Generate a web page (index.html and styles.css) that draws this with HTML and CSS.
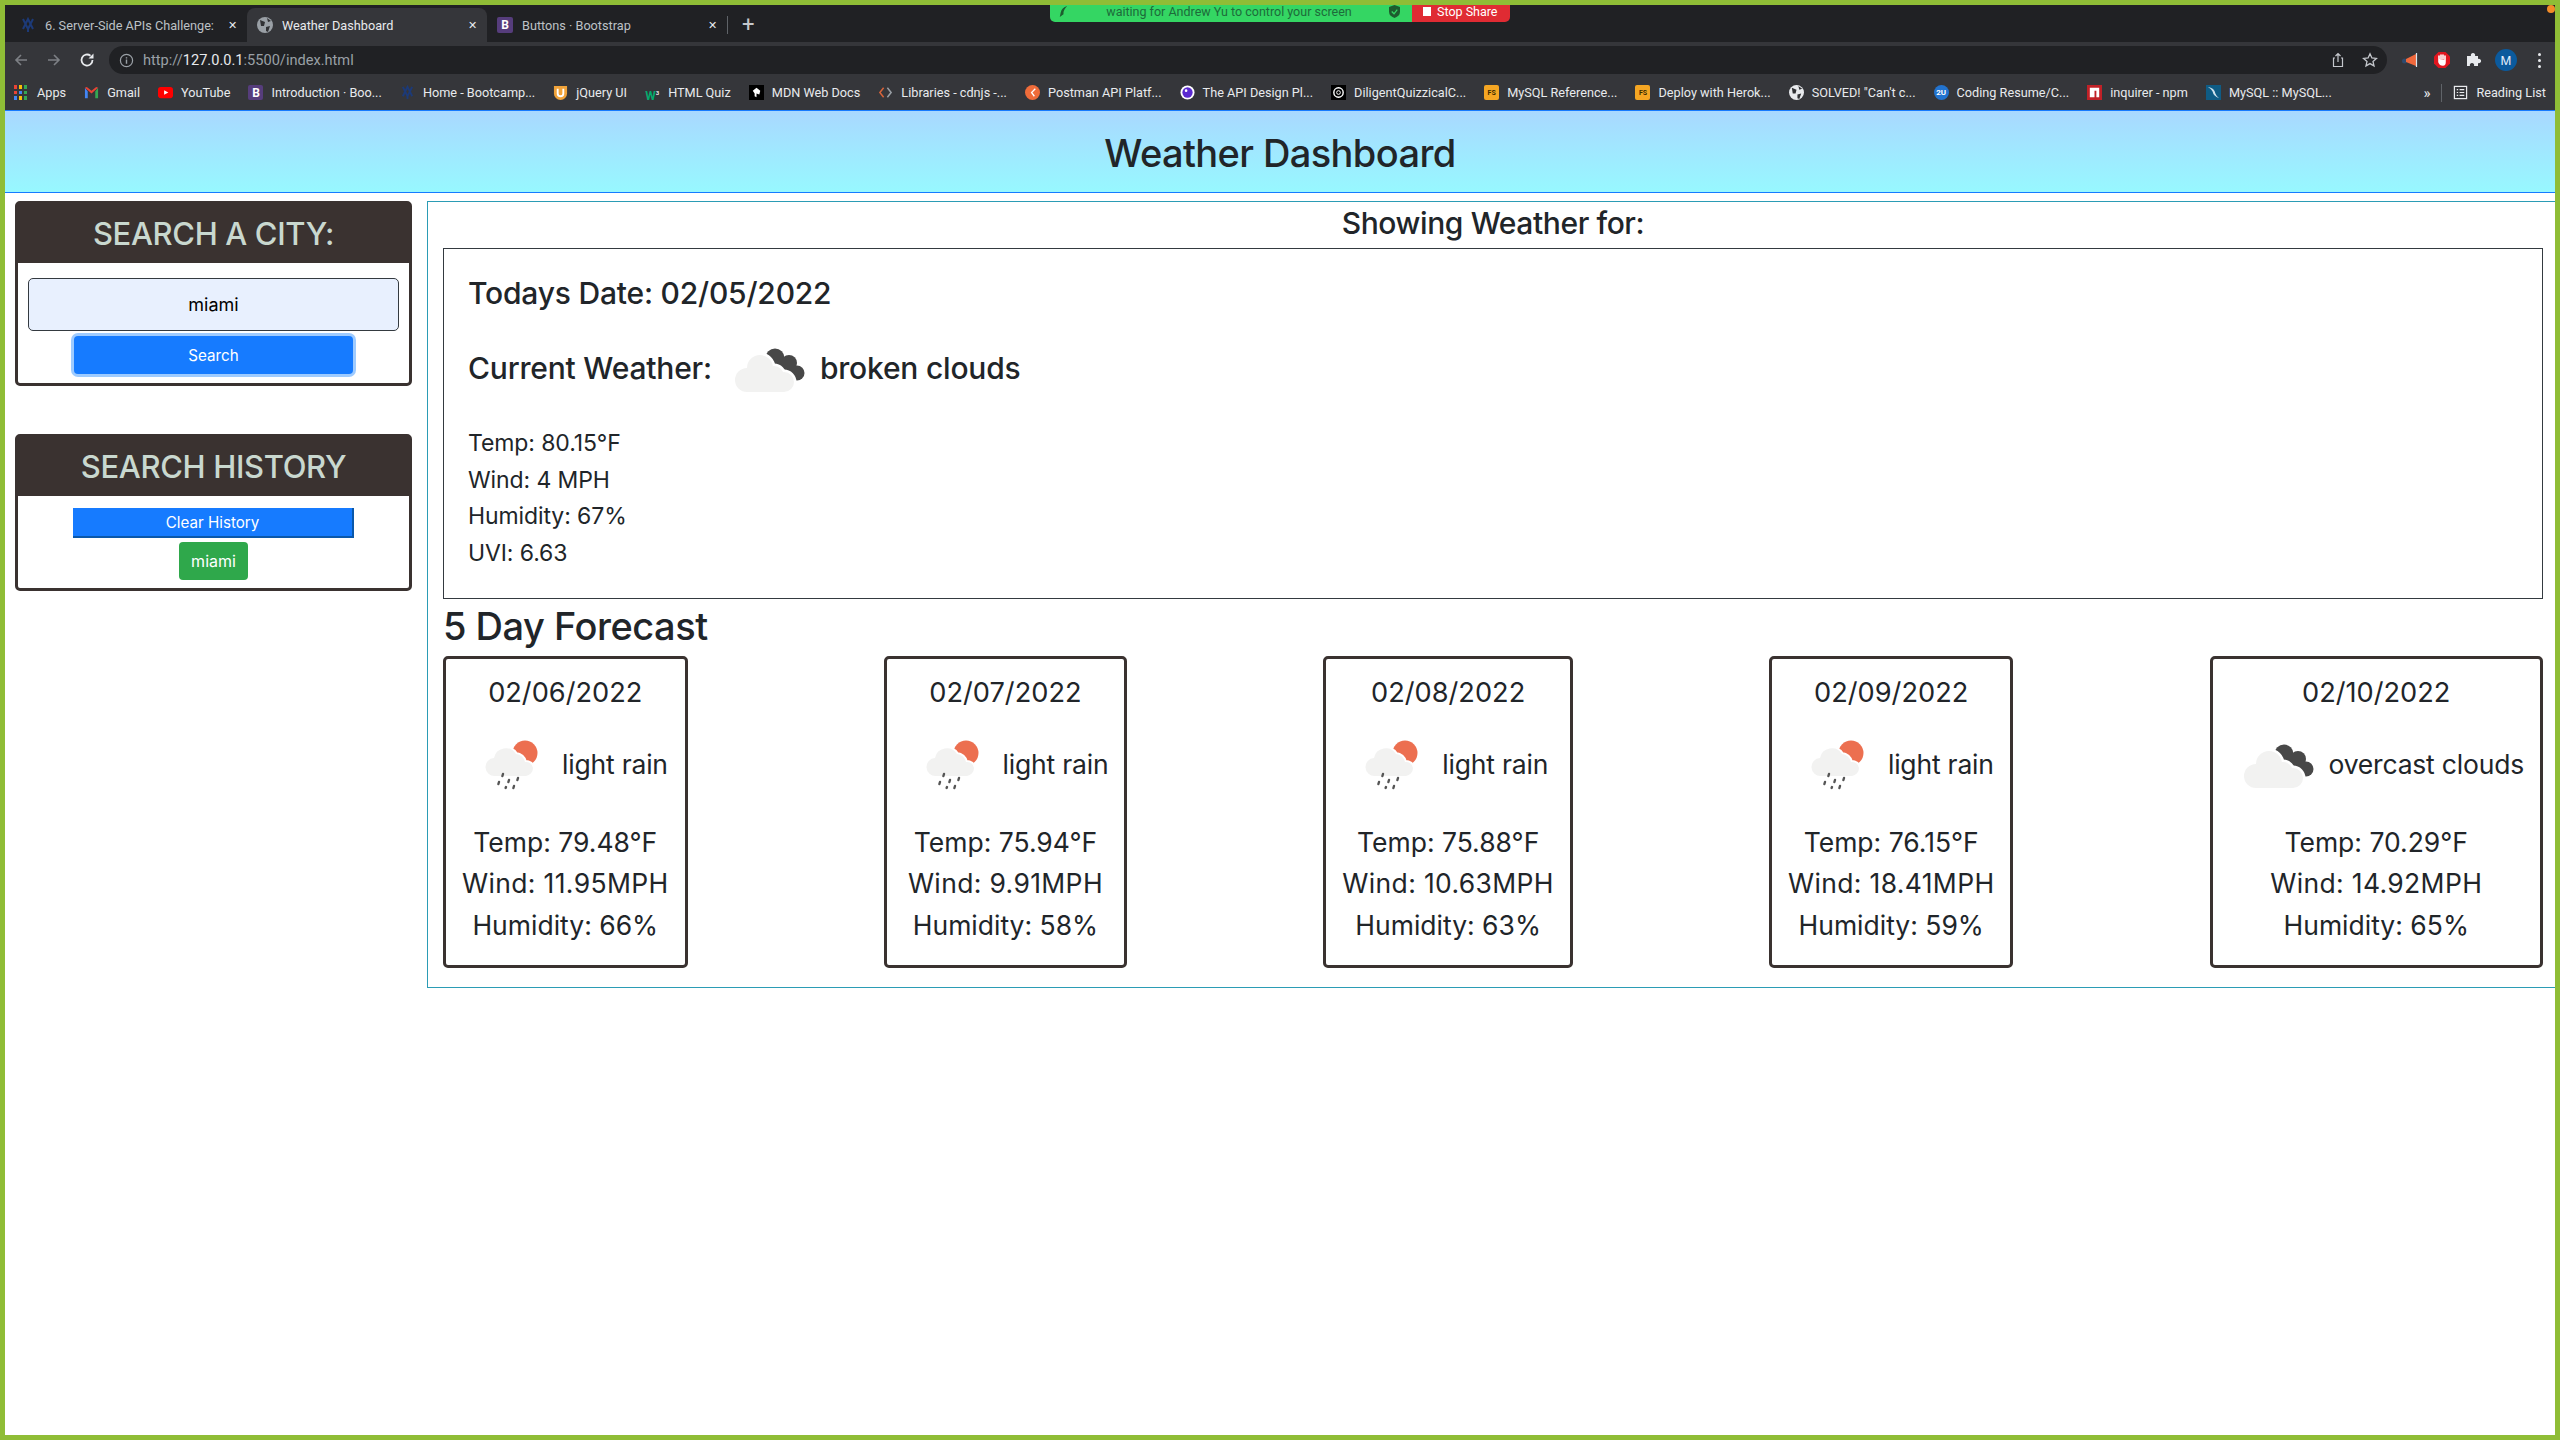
FILE: index.html
```html
<!DOCTYPE html>
<html lang="en">
<head>
    <meta charset="UTF-8">
    <meta name="viewport" content="width=device-width, initial-scale=1.0">
    <title>Weather Dashboard</title>
    <link rel="stylesheet" href="styles.css">
</head>
<body>
    <svg class="defs" width="0" height="0">
        <symbol id="icon-clouds" viewBox="0 0 100 100">
            <g fill="#484848">
                <circle cx="55" cy="40" r="9.5"/>
                <circle cx="69" cy="45" r="8"/>
                <circle cx="77" cy="55" r="7.5"/>
                <path d="M48 34 L80 50 L76 63 L60 60 L46 42 Z"/>
            </g>
            <g fill="#fff" stroke="#fff" stroke-width="5">
                <circle cx="40" cy="50" r="13"/>
                <circle cx="27" cy="62" r="12"/>
                <circle cx="54" cy="58" r="10"/>
                <circle cx="64" cy="64" r="10"/>
            </g>
            <g fill="#f2f2f1">
                <circle cx="40" cy="50" r="13"/>
                <circle cx="27" cy="62" r="12"/>
                <circle cx="54" cy="58" r="10"/>
                <circle cx="64" cy="64" r="10"/>
                <rect x="27" y="58" width="37" height="16"/>
            </g>
        </symbol>
        <symbol id="icon-rain" viewBox="0 0 100 100">
            <circle cx="63" cy="39" r="12.5" fill="#ec6f50"/>
            <path d="M33 62 a9 9 0 0 1 -1 -18 a12 12 0 0 1 22 -4 a10 10 0 0 1 9 8 a7 7 0 0 1 8 6 a8 8 0 0 1 -7 8 Z" fill="#fff" stroke="#fff" stroke-width="4"/>
            <path d="M33 62 a9 9 0 0 1 -1 -18 a12 12 0 0 1 22 -4 a10 10 0 0 1 9 8 a7 7 0 0 1 8 6 a8 8 0 0 1 -7 8 Z" fill="#f2f2f1"/>
            <g stroke="#555" stroke-width="2.4" stroke-linecap="round">
                <path d="M41 60 l-.6 2"/><path d="M37 68 l-.6 2"/><path d="M47 66 l-.6 2"/>
                <path d="M56 64 l-.6 2"/><path d="M44 73 l-.4 1"/><path d="M52 72 l-.6 2"/>
            </g>
        </symbol>
        <symbol id="icon-globe" viewBox="0 0 16 16">
            <circle cx="8" cy="8" r="8" fill="currentColor"/>
            <path d="M3 3 L8 5 L7 9 L4 9 Z M9 10 L13 9 L11 15 L9 14 Z M10 1 L14 4 L11 5 Z" fill="#303134"/>
        </symbol>
    </svg>

    <div class="window">
        <div class="tabstrip">
            <div class="tab">
                <svg class="fav" viewBox="0 0 16 16"><path d="M3 2 L8 12 L13 2 M3 12 L8 2 L13 12 M8 12 V15" fill="none" stroke="#1c3a78" stroke-width="2"/></svg>
                <span class="tab-title">6. Server-Side APIs Challenge:</span>
                <span class="tab-close">✕</span>
            </div>
            <div class="tab active">
                <svg class="fav globe"><use href="#icon-globe"/></svg>
                <span class="tab-title">Weather Dashboard</span>
                <span class="tab-close">✕</span>
            </div>
            <div class="tab">
                <span class="fav badge badge-b">B</span>
                <span class="tab-title">Buttons · Bootstrap</span>
                <span class="tab-close">✕</span>
            </div>
            <span class="tab-sep"></span>
            <span class="new-tab">+</span>
        </div>

        <div class="toolbar">
            <div class="nav">
                <svg viewBox="0 0 16 16" class="dim"><path d="M14 8 H3 M8 3 L3 8 L8 13" fill="none" stroke="currentColor" stroke-width="1.6"/></svg>
                <svg viewBox="0 0 16 16" class="dim"><path d="M2 8 H13 M8 3 L13 8 L8 13" fill="none" stroke="currentColor" stroke-width="1.6"/></svg>
                <svg viewBox="0 0 16 16"><path d="M13.5 8 A5.5 5.5 0 1 1 11.5 3.8" fill="none" stroke="currentColor" stroke-width="1.8"/><path d="M14.5 1.5 V6.5 H9.5 Z" fill="currentColor"/></svg>
            </div>
            <div class="omnibox">
                <svg class="info" viewBox="0 0 16 16"><circle cx="8" cy="8" r="6.5" fill="none" stroke="currentColor" stroke-width="1.3"/><path d="M8 7 V11.5 M8 4.5 V5.8" stroke="currentColor" stroke-width="1.5"/></svg>
                <span class="url">http://<b>127.0.0.1</b>:5500/index.html</span>
                <svg class="omni-icon" viewBox="0 0 16 16"><path d="M5 6 H3.5 V14.5 H12.5 V6 H11 M8 10 V1.5 M5.5 4 L8 1.5 L10.5 4" fill="none" stroke="currentColor" stroke-width="1.2"/></svg>
                <svg class="omni-icon" viewBox="0 0 16 16"><path d="M8 1.8 L9.9 6 L14.4 6.4 L11 9.4 L12 13.9 L8 11.6 L4 13.9 L5 9.4 L1.6 6.4 L6.1 6 Z" fill="none" stroke="currentColor" stroke-width="1.3"/></svg>
            </div>
            <div class="extensions">
                <svg viewBox="0 0 18 18"><circle cx="3.5" cy="10" r="2.5" fill="#2c4a6e"/><path d="M5 8 L15 3 V15 L5 11 Z" fill="#f0683c"/><path d="M15.5 2 V16" stroke="#d8e4ee" stroke-width="1.2"/></svg>
                <svg viewBox="0 0 18 18"><path d="M5.5 1 H12.5 L17 5.5 V12.5 L12.5 17 H5.5 L1 12.5 V5.5 Z" fill="#e0161f"/><path d="M6 8 V5 M8 8 V4 M10 8 V4 M12 9 V5 M6 8 V11 Q7 14 10 14 Q12 14 12 11 V9" fill="#fff" stroke="#fff" stroke-width="1.6" stroke-linecap="round"/></svg>
                <svg viewBox="0 0 18 18"><path d="M2 5 H6 a2.2 2.2 0 1 1 4 0 H13 V8 a2.2 2.2 0 1 1 0 4 V15 H9 a2.2 2.2 0 1 0 -4 0 H2 Z" fill="#e8eaed"/></svg>
                <span class="avatar">M</span>
                <span class="dots"><i></i><i></i><i></i></span>
            </div>
        </div>

        <div class="bookmarks">
            <div class="bm"><span class="bm-icon apps"><i></i><i></i><i></i><i></i><i></i><i></i><i></i><i></i><i></i></span>Apps</div>
            <div class="bm"><svg class="bm-icon" viewBox="0 0 16 16"><path d="M1 3 V14 H4 V7 Z" fill="#4285f4"/><path d="M15 3 V14 H12 V7 Z" fill="#34a853"/><path d="M1 3 L8 9 L15 3 L13 2 L8 6 L3 2 Z" fill="#ea4335"/></svg>Gmail</div>
            <div class="bm"><svg class="bm-icon" viewBox="0 0 16 16"><rect y="2" width="16" height="12" rx="3" fill="#f00"/><path d="M6.5 5.5 L11 8 L6.5 10.5 Z" fill="#fff"/></svg>YouTube</div>
            <div class="bm"><span class="bm-icon badge badge-b">B</span>Introduction · Boo...</div>
            <div class="bm"><svg class="bm-icon" viewBox="0 0 16 16"><path d="M3 2 L8 12 L13 2 M3 12 L8 2 L13 12 M8 12 V15" fill="none" stroke="#1c3a78" stroke-width="2"/></svg>Home - Bootcamp...</div>
            <div class="bm"><svg class="bm-icon" viewBox="0 0 16 16"><path d="M1 1 H15 V9 A7 7 0 0 1 1 9 Z" fill="#f0a33a"/><path d="M5 4 V9 A3 3 0 0 0 11 9 V4" fill="none" stroke="#fff" stroke-width="2"/></svg>jQuery UI</div>
            <div class="bm"><span class="bm-icon w3">W<sup>3</sup></span>HTML Quiz</div>
            <div class="bm"><svg class="bm-icon" viewBox="0 0 16 16"><rect width="16" height="16" fill="#000"/><path d="M4 6 L8 3 L12 6 L11 10 L8 9 L8 13 L6 12 L6 9 Z" fill="#fff"/></svg>MDN Web Docs</div>
            <div class="bm"><svg class="bm-icon" viewBox="0 0 16 16"><path d="M6 3 L2 8 L6 13" fill="none" stroke="#d9643a" stroke-width="1.6"/><path d="M10 3 L14 8 L10 13" fill="none" stroke="#9aa0a6" stroke-width="1.6"/></svg>Libraries - cdnjs -...</div>
            <div class="bm"><svg class="bm-icon" viewBox="0 0 16 16"><circle cx="8" cy="8" r="8" fill="#ef6c3a"/><path d="M11 4 L7 8 L10 12" fill="none" stroke="#fff" stroke-width="1.4"/></svg>Postman API Platf...</div>
            <div class="bm"><svg class="bm-icon" viewBox="0 0 16 16"><circle cx="8" cy="8" r="7.5" fill="#fff"/><circle cx="8" cy="8" r="5.5" fill="#5b2ad0"/><circle cx="6.5" cy="6" r="1.4" fill="#fff"/></svg>The API Design Pl...</div>
            <div class="bm"><svg class="bm-icon" viewBox="0 0 16 16"><rect width="16" height="16" fill="#000"/><circle cx="8" cy="8" r="5" fill="none" stroke="#fff" stroke-width="1.5"/><circle cx="8" cy="8" r="2" fill="none" stroke="#fff"/></svg>DiligentQuizzicalC...</div>
            <div class="bm"><span class="bm-icon badge badge-fs">FS</span>MySQL Reference...</div>
            <div class="bm"><span class="bm-icon badge badge-fs">FS</span>Deploy with Herok...</div>
            <div class="bm"><svg class="bm-icon globe-light"><use href="#icon-globe"/></svg>SOLVED! "Can't c...</div>
            <div class="bm"><span class="bm-icon badge badge-2u">2U</span>Coding Resume/C...</div>
            <div class="bm"><svg class="bm-icon" viewBox="0 0 16 16"><rect width="16" height="16" fill="#c12127"/><path d="M3 3 H13 V13 H10 V6 H8 V13 H3 Z" fill="#fff"/></svg>inquirer - npm</div>
            <div class="bm"><svg class="bm-icon" viewBox="0 0 16 16"><rect width="16" height="16" fill="#0f5c85"/><path d="M2 2 Q9 3 10 9 Q11 12 14 14 Q8 12 7 7 Q6 4 2 2 Z" fill="#cfe3ee"/></svg>MySQL :: MySQL...</div>
            <div class="bm-end">
                <span class="more">»</span>
                <span class="bm-sep"></span>
                <div class="bm"><svg class="bm-icon" viewBox="0 0 16 16"><rect x="1.5" y="1.5" width="13" height="13" fill="none" stroke="#e8eaed" stroke-width="1.3"/><path d="M4 5 H5.5 M7 5 H12 M4 8 H5.5 M7 8 H12 M4 11 H5.5 M7 11 H12" stroke="#e8eaed" stroke-width="1.3"/></svg>Reading List</div>
            </div>
        </div>

        <header class="page-header">
            <h1>Weather Dashboard</h1>
        </header>

        <div class="layout">
            <aside class="sidebar">
                <section class="panel">
                    <h2 class="panel-head">SEARCH A CITY:</h2>
                    <div class="panel-body search-body">
                        <input class="city-input" type="text" value="miami">
                        <button class="btn btn-search">Search</button>
                    </div>
                </section>
                <section class="panel">
                    <h2 class="panel-head">SEARCH HISTORY</h2>
                    <div class="panel-body history-body">
                        <button class="btn btn-clear">Clear History</button>
                        <button class="btn btn-city">miami</button>
                    </div>
                </section>
            </aside>

            <main class="results">
                <h3 class="showing">Showing Weather for:</h3>
                <div class="current">
                    <h3 class="today">Todays Date: 02/05/2022</h3>
                    <div class="now">
                        <h3>Current Weather:</h3>
                        <svg class="wx"><use href="#icon-clouds"/></svg>
                        <h3>broken clouds</h3>
                    </div>
                    <div class="stats">
                        <p>Temp: 80.15°F</p>
                        <p>Wind: 4 MPH</p>
                        <p>Humidity: 67%</p>
                        <p>UVI: 6.63</p>
                    </div>
                </div>
                <h2 class="forecast-title">5 Day Forecast</h2>
                <div class="forecast">
                    <div class="card">
                        <div class="card-date">02/06/2022</div>
                        <div class="card-wx"><svg class="wx"><use href="#icon-rain"/></svg>light rain</div>
                        <p>Temp: 79.48°F</p>
                        <p class="wind">Wind: 11.95MPH</p>
                        <p>Humidity: 66%</p>
                    </div>
                    <div class="card">
                        <div class="card-date">02/07/2022</div>
                        <div class="card-wx"><svg class="wx"><use href="#icon-rain"/></svg>light rain</div>
                        <p>Temp: 75.94°F</p>
                        <p class="wind">Wind: 9.91MPH</p>
                        <p>Humidity: 58%</p>
                    </div>
                    <div class="card">
                        <div class="card-date">02/08/2022</div>
                        <div class="card-wx"><svg class="wx"><use href="#icon-rain"/></svg>light rain</div>
                        <p>Temp: 75.88°F</p>
                        <p class="wind">Wind: 10.63MPH</p>
                        <p>Humidity: 63%</p>
                    </div>
                    <div class="card">
                        <div class="card-date">02/09/2022</div>
                        <div class="card-wx"><svg class="wx"><use href="#icon-rain"/></svg>light rain</div>
                        <p>Temp: 76.15°F</p>
                        <p class="wind">Wind: 18.41MPH</p>
                        <p>Humidity: 59%</p>
                    </div>
                    <div class="card">
                        <div class="card-date">02/10/2022</div>
                        <div class="card-wx"><svg class="wx"><use href="#icon-clouds"/></svg>overcast clouds</div>
                        <p>Temp: 70.29°F</p>
                        <p class="wind">Wind: 14.92MPH</p>
                        <p>Humidity: 65%</p>
                    </div>
                </div>
            </main>
        </div>
    </div>

    <!-- zoom share bar, floats over the browser chrome -->
    <div class="share-bar">
        <div class="share-status">
            <svg class="share-s" viewBox="0 0 10 14"><path d="M9 1 Q3 3 2 8 L1 13 L5 10 Q4 6 9 1 Z" fill="#1d5c2e"/></svg>
            <span>waiting for Andrew Yu to control your screen</span>
            <svg class="share-s" viewBox="0 0 12 14"><path d="M6 0 L12 2 V7 Q12 12 6 14 Q0 12 0 7 V2 Z" fill="#1d5c2e"/><path d="M3 7 L5.5 9.5 L9 5" fill="none" stroke="#34d663" stroke-width="1.4"/></svg>
        </div>
        <div class="share-stop"><i></i>Stop Share</div>
    </div>
    <span class="rec-dot"></span>
</body>
</html>
```

FILE: styles.css
```css
html, body {
    margin: 0;
    padding: 0;
    height: 100%;
    font-family: Inter, "Liberation Sans", sans-serif;
    color: #212529;
    background: #fff;
}
h1, h2, h3, p {
    margin: 0;
    font-weight: 400;
}
.defs {
    position: absolute;
}
.window {
    height: 1440px;
    box-sizing: border-box;
    border: 5px solid #8fbd36;
    overflow: hidden;
    display: flex;
    flex-direction: column;
}

/* browser chrome */
.tabstrip {
    height: 37px;
    flex: none;
    box-sizing: border-box;
    padding-top: 3px;
    display: flex;
    align-items: center;
    background: #202124;
    color: #bdc1c6;
    font-family: Roboto, "Liberation Sans", sans-serif;
    font-size: 12.7px;
}
.tab {
    width: 240px;
    height: 34px;
    box-sizing: border-box;
    padding: 0 10px;
    display: flex;
    align-items: center;
    gap: 9px;
    border-radius: 8px 8px 0 0;
}
.tab:first-child {
    width: 242px;
    padding-left: 15px;
}
.tab.active {
    background: #35363a;
    color: #e8eaed;
}
.tab-title {
    flex: 1;
    white-space: nowrap;
    overflow: hidden;
}
.tab-close {
    font-size: 11px;
    color: #e8eaed;
}
.fav {
    width: 16px;
    height: 16px;
    flex: none;
}
.globe {
    color: #9aa0a6;
}
.tab-sep {
    width: 1px;
    height: 18px;
    background: #5f6368;
}
.new-tab {
    margin-left: 14px;
    font-size: 22px;
    line-height: 1;
    color: #c4c7cc;
}
.badge {
    display: flex;
    align-items: center;
    justify-content: center;
    border-radius: 2px;
    font-weight: 700;
}
.badge-b {
    background: #563d7c;
    color: #fff;
    font-size: 12px;
}
.badge-fs {
    background: #f5a623;
    color: #3a2a00;
    font-size: 7px;
}
.badge-2u {
    background: #2273cf;
    color: #fff;
    font-size: 8px;
    border-radius: 50%;
}
.toolbar {
    height: 32px;
    flex: none;
    display: flex;
    align-items: flex-end;
    background: #35363a;
    color: #e8eaed;
}
.nav {
    width: 104px;
    height: 28px;
    flex: none;
    box-sizing: border-box;
    padding-left: 8px;
    display: flex;
    align-items: center;
    gap: 17px;
}
.nav svg {
    width: 16px;
    height: 16px;
}
.nav .dim {
    color: #7d8085;
}
.omnibox {
    flex: 1;
    height: 28px;
    box-sizing: border-box;
    padding: 0 9px 0 10px;
    display: flex;
    align-items: center;
    background: #202124;
    border-radius: 14px;
    color: #9aa0a6;
}
.info {
    width: 15px;
    height: 15px;
    margin-right: 9px;
}
.url {
    flex: 1;
    font-family: Roboto, "Liberation Sans", sans-serif;
    font-size: 14.6px;
}
.url b {
    font-weight: 400;
    color: #e8eaed;
}
.omni-icon {
    width: 16px;
    height: 16px;
    margin-left: 16px;
    color: #c4c7cc;
}
.extensions {
    width: 168px;
    height: 28px;
    flex: none;
    box-sizing: border-box;
    padding-left: 14px;
    display: flex;
    align-items: center;
    gap: 14px;
}
.extensions svg {
    width: 18px;
    height: 18px;
}
.avatar {
    width: 22px;
    height: 22px;
    margin: 0 -2px;
    border-radius: 50%;
    background: #0b5a9d;
    color: #e8f0fe;
    font-size: 12px;
    display: flex;
    align-items: center;
    justify-content: center;
}
.dots {
    margin-left: 9px;
    display: flex;
    flex-direction: column;
    gap: 3px;
}
.dots i {
    width: 3px;
    height: 3px;
    border-radius: 50%;
    background: #e8eaed;
}
.bookmarks {
    height: 36px;
    flex: none;
    box-sizing: border-box;
    padding: 1px 9px 0;
    display: flex;
    align-items: center;
    gap: 18.1px;
    background: #35363a;
    color: #e8eaed;
    font-family: Roboto, "Liberation Sans", sans-serif;
    font-size: 12.7px;
}
.bm {
    display: flex;
    align-items: center;
    gap: 8px;
    white-space: nowrap;
}
.bm-icon {
    width: 15px;
    height: 15px;
    flex: none;
}
.globe-light {
    color: #e8eaed;
}
.apps {
    display: grid;
    grid-template-columns: repeat(3, 3px);
    gap: 2px;
}
.apps i:nth-child(3n+1) { background: #ea4335; }
.apps i:nth-child(3n+2) { background: #fbbc05; }
.apps i:nth-child(3n) { background: #34a853; }
.apps i:nth-child(7), .apps i:nth-child(5) { background: #4285f4; }
.w3 {
    color: #04aa6d;
    font-weight: 700;
    font-size: 12px;
    line-height: 15px;
}
.w3 sup {
    font-size: 6px;
    color: #e8eaed;
}
.bm-end {
    margin-left: auto;
    display: flex;
    align-items: center;
}
.more {
    font-size: 15px;
    margin-right: 11px;
}
.bm-sep {
    width: 1px;
    height: 18px;
    margin-right: 11px;
    background: #5f6368;
}
.share-bar {
    position: absolute;
    top: 5px;
    left: 1050px;
    width: 460px;
    height: 17px;
    display: flex;
    font-family: Roboto, "Liberation Sans", sans-serif;
    font-size: 12.5px;
    border-radius: 0 0 5px 5px;
    overflow: hidden;
}
.share-status {
    flex: 1;
    box-sizing: border-box;
    padding: 0 12px 4px 8px;
    display: flex;
    align-items: center;
    justify-content: space-between;
    background: #34d663;
    color: #1d6b3a;
}
.share-s {
    width: 11px;
    height: 13px;
}
.share-stop {
    width: 98px;
    box-sizing: border-box;
    padding: 0 0 4px 11px;
    display: flex;
    align-items: center;
    gap: 6px;
    background: #e02b33;
    color: #fff;
}
.share-stop i {
    width: 8px;
    height: 9px;
    background: #fff;
}
.rec-dot {
    position: absolute;
    top: 5px;
    left: 2547px;
    width: 8px;
    height: 8px;
    border-radius: 50%;
    background: #f28c28;
}

/* page */
.page-header {
    height: 83px;
    flex: none;
    box-sizing: border-box;
    padding-top: 2px;
    border-top: 1px solid #167bff;
    border-bottom: 1px solid #167bff;
    display: flex;
    align-items: center;
    justify-content: center;
    background: linear-gradient(#a9d8ff, #97f8ff);
}
.page-header h1 {
    font-size: 38px;
    font-weight: 500;
    letter-spacing: -0.6px;
}
.layout {
    padding: 8px 0 0 10px;
    display: flex;
    align-items: flex-start;
    gap: 15px;
}
.sidebar {
    width: 397px;
    flex: none;
    display: flex;
    flex-direction: column;
    gap: 48px;
}
.panel {
    border: 3px solid #3a3230;
    border-radius: 5px;
}
.panel-head {
    height: 59px;
    display: flex;
    align-items: center;
    justify-content: center;
    background: #3a3230;
    color: #c9d8cf;
    font-size: 31px;
    font-weight: 500;
    letter-spacing: -0.35px;
}
.panel-body {
    display: flex;
    flex-direction: column;
    align-items: center;
}
.search-body {
    padding: 15px 0 9px;
    gap: 5px;
}
.history-body {
    padding: 12px 0 8px;
    gap: 4px;
}
.city-input {
    width: 371px;
    height: 53px;
    box-sizing: border-box;
    border: 1px solid #343a40;
    border-radius: 5px;
    background: #e8f0fe;
    font-family: inherit;
    font-size: 18px;
    text-align: center;
    color: #000;
}
.btn {
    font-family: inherit;
    color: #fff;
    font-size: 15.2px;
    border: none;
}
.btn-search {
    width: 279px;
    height: 38px;
    background: #167bff;
    border-radius: 4px;
    box-shadow: 0 0 0 3px #9ecbff;
}
.btn-clear {
    width: 281px;
    height: 30px;
    background: #167bff;
    border-right: 2px solid #0a58ab;
    border-bottom: 2px solid #0a58ab;
}
.btn-city {
    width: 69px;
    height: 38px;
    background: #2fa84b;
    border-radius: 4px;
    font-size: 16px;
}
.results {
    flex: 1;
    height: 787px;
    box-sizing: border-box;
    padding: 0 12px 0 15px;
    border: 1px solid #2b9cb5;
    border-right: none;
}
.showing {
    height: 46px;
    line-height: 42px;
    text-align: center;
    font-size: 30px;
    font-weight: 500;
    letter-spacing: -0.4px;
}
.current {
    height: 351px;
    box-sizing: border-box;
    padding: 20px 24px 0;
    border: 1px solid #343a40;
}
.today, .now h3 {
    font-size: 30px;
    line-height: 48px;
    font-weight: 500;
    letter-spacing: -0.2px;
}
.now {
    margin-top: 1px;
    display: flex;
    align-items: center;
}
.now h3:first-child {
    margin-right: 8px;
}
.wx {
    width: 100px;
    height: 100px;
    flex: none;
}
.stats {
    margin-top: 7px;
    font-size: 23px;
    line-height: 36.5px;
    letter-spacing: -0.1px;
}
.forecast-title {
    height: 57px;
    line-height: 54px;
    font-size: 38px;
    font-weight: 500;
    letter-spacing: -0.5px;
}
.forecast {
    display: flex;
    justify-content: space-between;
}
.card {
    height: 312px;
    box-sizing: border-box;
    padding: 13px 16px 0;
    border: 3px solid #3a3230;
    border-radius: 5px;
    text-align: center;
    font-size: 26.5px;
    line-height: 41.2px;
}
.card-wx {
    height: 100px;
    margin: 1px 0 8px;
    display: flex;
    align-items: center;
    white-space: nowrap;
    letter-spacing: -0.2px;
}
.card-date {
    font-size: 27.2px;
}
.wind {
    letter-spacing: 0.35px;
}
```
